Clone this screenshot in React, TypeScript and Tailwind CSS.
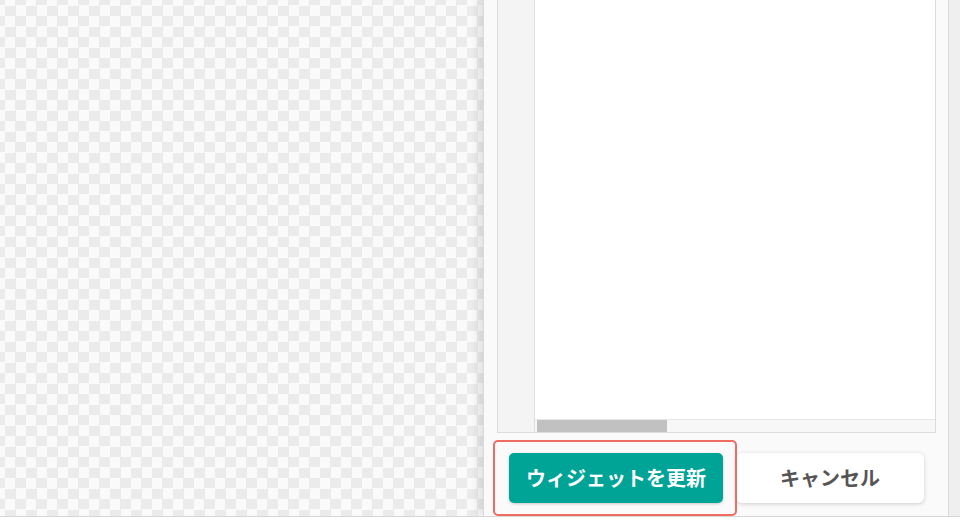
import React from "react";

const jp = { fontFamily: '"Noto Sans CJK JP", "Noto Sans", sans-serif' };

function EditorBox() {
  return (
    <div className="flex h-[433px] border-x border-b border-[#dcdcdc] bg-white">
      <div className="w-[37px] shrink-0 bg-[#f4f4f4] border-r border-[#dedede]" />
      <div className="flex flex-1 flex-col">
        <div className="flex-1 bg-white" />
        <div className="h-[13px] border-t border-[#e6e6e6] bg-[#f7f7f7] pl-[2px]">
          <div className="h-full w-[130px] bg-[#c1c1c1]" />
        </div>
      </div>
    </div>
  );
}

function Buttons() {
  return (
    <div className="relative flex-1">
      <div className="flex items-start gap-[13px] pt-[20px] pl-[12px]">
        <button
          style={jp}
          className="h-[50px] w-[214px] rounded-[5px] bg-[#00a497] text-[20px] font-bold text-white shadow-[0_1px_3px_rgba(0,0,0,0.2)]"
        >
          ウィジェットを更新
        </button>
        <button
          style={jp}
          className="h-[50px] w-[188px] rounded-[6px] bg-white text-[20px] font-bold text-[#555555] shadow-[0_1px_4px_rgba(0,0,0,0.18)]"
        >
          キャンセル
        </button>
      </div>
      {/* highlight marker */}
      <div className="absolute left-[-4px] top-[7px] h-[76px] w-[244px] rounded-[5px] border-2 border-[#f06b62]" />
    </div>
  );
}

export default function App() {
  return (
    <div className="flex h-[526px] w-[960px] flex-col overflow-hidden bg-white">
      <div className="flex h-[516px]">
        <div className="flex-1 bg-[conic-gradient(#ebebeb_25%,#fafafa_0_50%,#ebebeb_0_75%,#fafafa_0)] bg-[length:21px_21px] bg-[position:5px_-5px]" />
        <div className="flex w-[466px] flex-col border-l border-r border-[#dadada] bg-[#fafafa] pl-[13px] pr-[12px] shadow-[-5px_0_8px_rgba(0,0,0,0.10)]">
          <EditorBox />
          <Buttons />
        </div>
        <div className="w-[11px] bg-[#efefef]" />
      </div>
      <div className="h-[10px] border-t border-[#d6d6d6] bg-white" />
    </div>
  );
}
